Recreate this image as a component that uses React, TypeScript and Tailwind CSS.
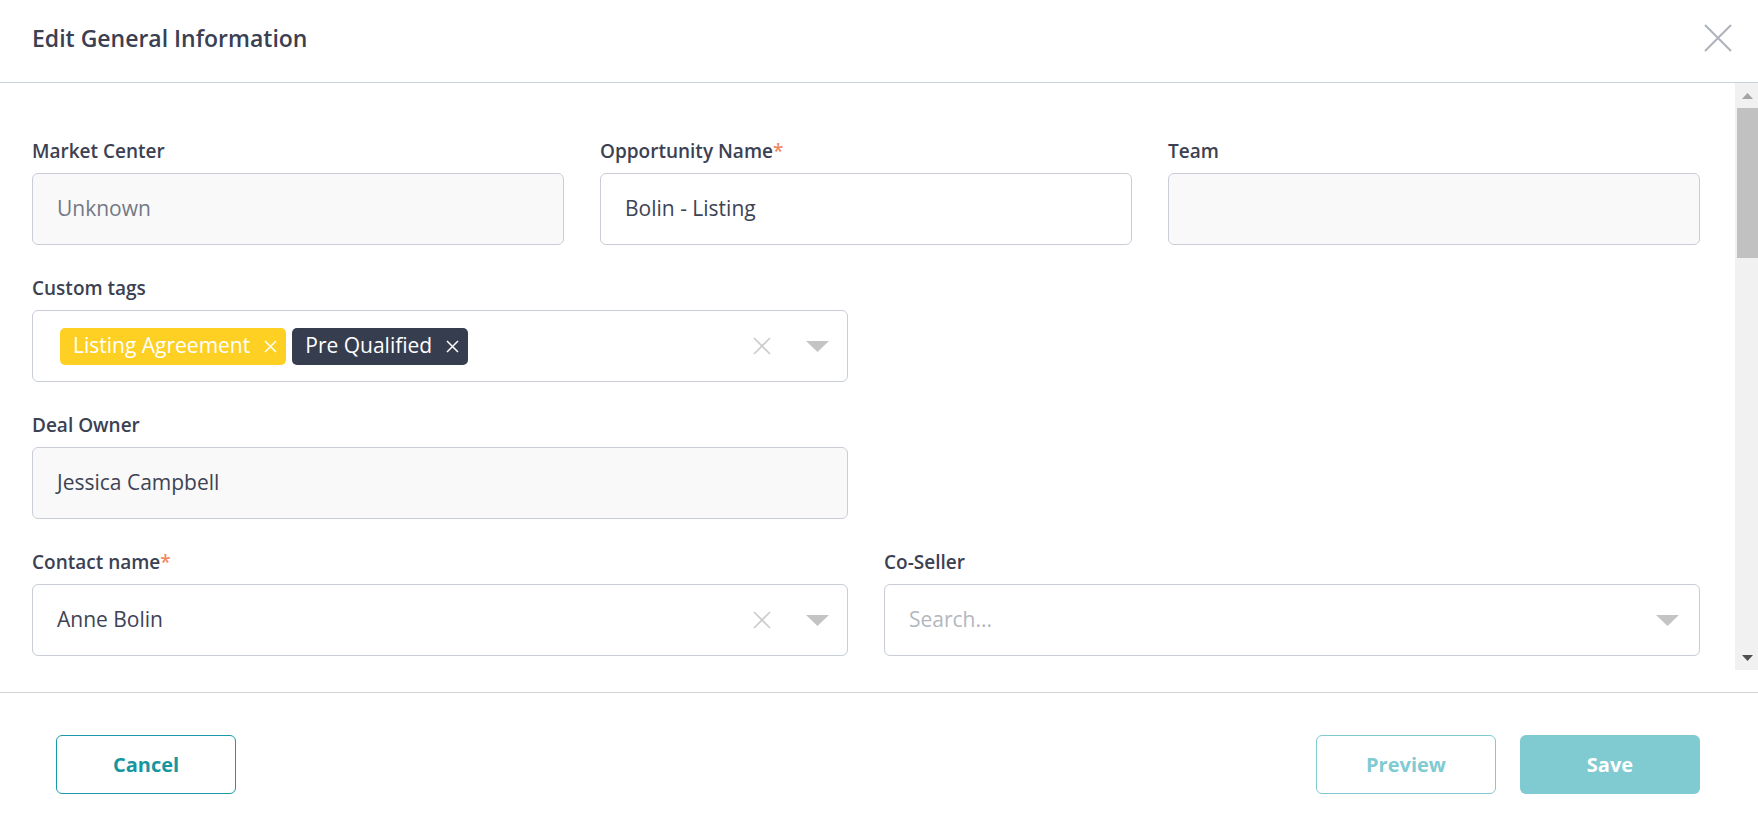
import React from "react";

function Label({ text, required }: { text: string; required?: boolean }) {
  return (
    <div className="mb-[9px] text-[19px] leading-[26px] font-semibold text-[#3b4152]">
      {text}
      {required && <span className="text-[#f0895f]">*</span>}
    </div>
  );
}

function ClearIcon() {
  return (
    <svg width="20" height="20" viewBox="0 0 20 20" className="shrink-0">
      <path d="M2 2 L18 18 M18 2 L2 18" stroke="#cbcbcb" strokeWidth="1.6" fill="none" />
    </svg>
  );
}

function Caret() {
  return (
    <svg width="23" height="11" viewBox="0 0 23 11" className="shrink-0">
      <polygon points="0,0 23,0 11.5,11" fill="#c4c4c4" />
    </svg>
  );
}

function TagX() {
  return (
    <svg width="13" height="13" viewBox="0 0 13 13" className="shrink-0">
      <path d="M1 1 L12 12 M12 1 L1 12" stroke="#ffffff" strokeWidth="1.5" fill="none" />
    </svg>
  );
}

function Tag({ text, className }: { text: string; className: string }) {
  return (
    <span
      className={`flex h-[37px] items-center gap-[14px] rounded-[5px] pl-[13px] pr-[9px] text-[21px] text-white ${className}`}
    >
      {text}
      <TagX />
    </span>
  );
}

function Field({
  label,
  required,
  value,
  muted,
  disabled,
}: {
  label: string;
  required?: boolean;
  value?: string;
  muted?: boolean;
  disabled?: boolean;
}) {
  return (
    <div>
      <Label text={label} required={required} />
      <div
        className={`flex h-[72px] items-center rounded-md border border-[#c9ced6] px-6 text-[21px] ${
          disabled ? "bg-[#f9f9f9]" : "bg-white"
        } ${muted ? "text-[#737987]" : "text-[#3d4354]"}`}
      >
        {value}
      </div>
    </div>
  );
}

export default function App() {
  return (
    <div className="flex h-[831px] w-[1758px] flex-col overflow-hidden bg-white font-['Open_Sans',sans-serif]">
      {/* header */}
      <div className="flex h-[83px] shrink-0 items-center justify-between border-b border-[#c9d1d9] pl-8 pr-[26px]">
        <h1 className="pb-[6px] text-[23px] font-semibold text-[#3a4052]">Edit General Information</h1>
        <svg width="28" height="28" viewBox="0 0 28 28" className="mb-[6px]">
          <path d="M1 1 L27 27 M27 1 L1 27" stroke="#aeb2ba" strokeWidth="2" fill="none" />
        </svg>
      </div>

      {/* body */}
      <div className="flex h-[587px] shrink-0">
        <div className="flex-1 overflow-hidden pl-8 pr-[35px] pt-[55px]">
          <div className="grid grid-cols-3 gap-x-9">
            <Field label="Market Center" value="Unknown" muted disabled />
            <Field label="Opportunity Name" required value="Bolin - Listing" />
            <Field label="Team" disabled />
          </div>

          <div className="mt-[30px] grid grid-cols-2 gap-x-9 gap-y-[30px]">
            <div>
              <Label text="Custom tags" />
              <div className="flex h-[72px] items-center rounded-md border border-[#c9ced6] pl-[27px] pr-[18px]">
                <div className="flex flex-1 items-center gap-[6px]">
                  <Tag text="Listing Agreement" className="bg-[#fdd023]" />
                  <Tag text="Pre Qualified" className="bg-[#363d4f]" />
                </div>
                <ClearIcon />
                <div className="w-[34px]" />
                <Caret />
              </div>
            </div>
            <div />

            <Field label="Deal Owner" value="Jessica Campbell" disabled />
            <div />

            <div>
              <Label text="Contact name" required />
              <div className="flex h-[72px] items-center rounded-md border border-[#c9ced6] pl-6 pr-[18px] text-[21px] text-[#3d4354]">
                <span className="flex-1">Anne Bolin</span>
                <ClearIcon />
                <div className="w-[34px]" />
                <Caret />
              </div>
            </div>
            <div>
              <Label text="Co-Seller" />
              <div className="flex h-[72px] items-center rounded-md border border-[#c9ced6] pl-6 pr-[20px] text-[21px] text-[#b3b7bf]">
                <span className="flex-1">Search...</span>
                <Caret />
              </div>
            </div>
          </div>
        </div>

        {/* scrollbar */}
        <div className="flex w-[23px] shrink-0 flex-col bg-[#f1f1f1]">
          <div className="flex h-[25px] items-center justify-center pl-[2px]">
            <svg width="11" height="6" viewBox="0 0 11 6">
              <polygon points="0,6 11,6 5.5,0" fill="#a3a3a3" />
            </svg>
          </div>
          <div className="ml-[2px] h-[150px] bg-[#c1c1c1]" />
          <div className="flex-1" />
          <div className="flex h-[25px] items-center justify-center pl-[2px]">
            <svg width="11" height="6" viewBox="0 0 11 6">
              <polygon points="0,0 11,0 5.5,6" fill="#505050" />
            </svg>
          </div>
        </div>
      </div>

      <div className="h-[22px] shrink-0" />

      {/* footer */}
      <div className="flex flex-1 items-start justify-between border-t border-[#d3d3d3] pl-14 pr-[58px] pt-[42px]">
        <button className="h-[59px] w-[180px] rounded-md border border-[#1a9aa6] text-[20px] font-bold text-[#16969f]">
          Cancel
        </button>
        <div className="flex gap-6">
          <button className="h-[59px] w-[180px] rounded-md border border-[#80cbd2] text-[20px] font-bold text-[#80cbd2]">
            Preview
          </button>
          <button className="h-[59px] w-[180px] rounded-md bg-[#80cbd2] text-[20px] font-bold text-white">
            Save
          </button>
        </div>
      </div>
    </div>
  );
}
